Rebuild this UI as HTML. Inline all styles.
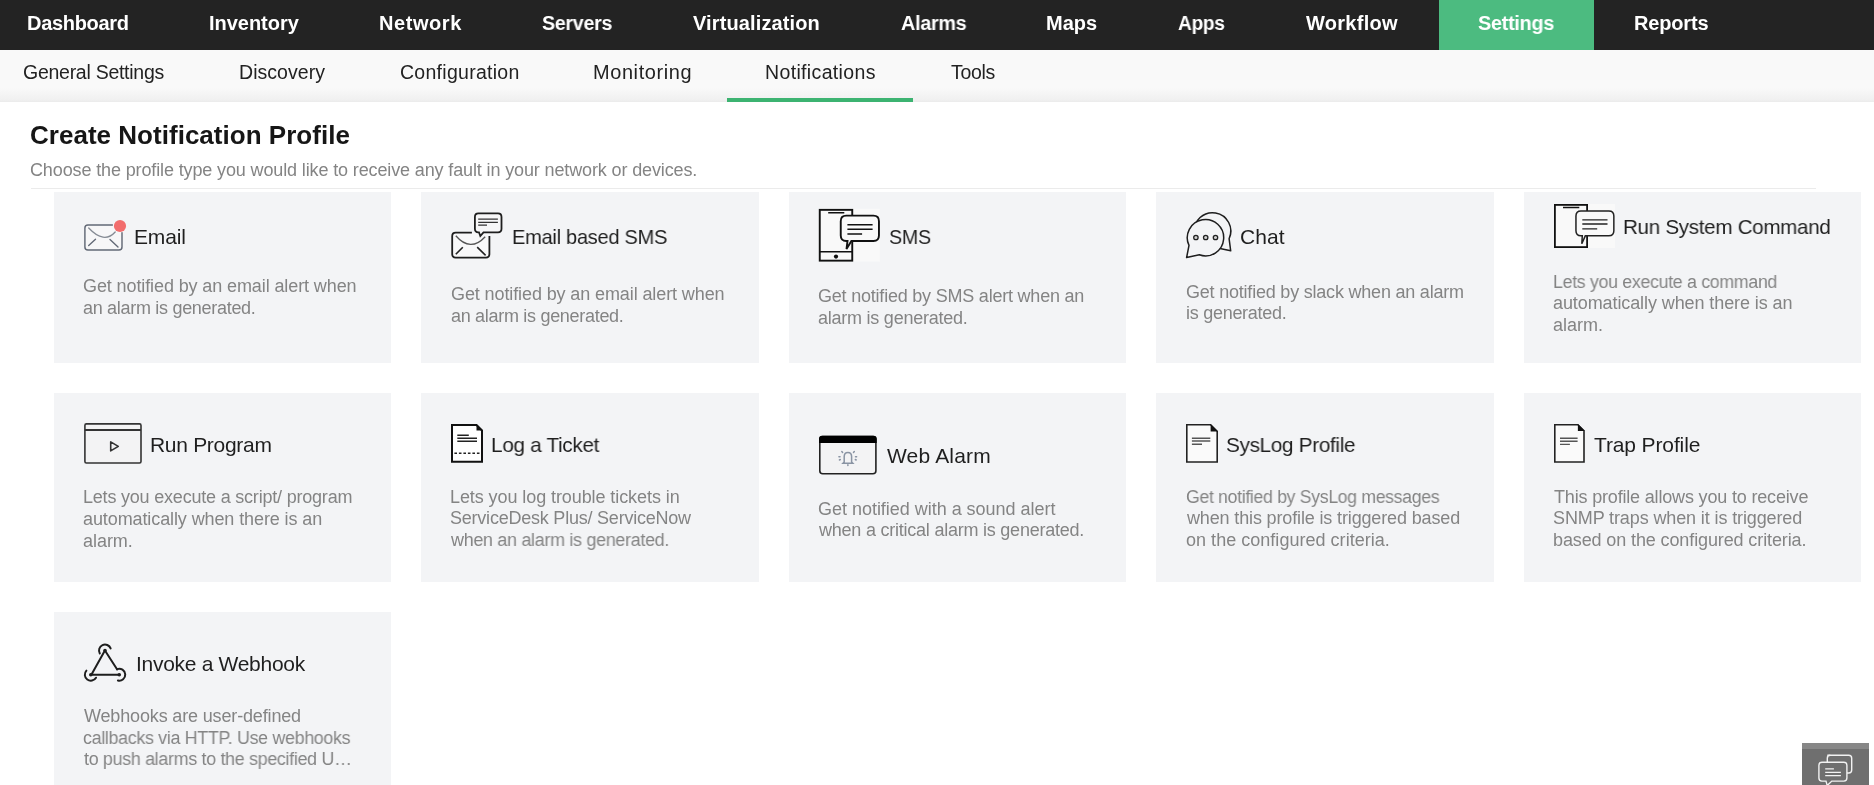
<!DOCTYPE html>
<html>
<head>
<meta charset="utf-8">
<title>Create Notification Profile</title>
<style>
html,body{margin:0;padding:0;}
body{width:1874px;height:785px;overflow:hidden;position:relative;background:#ffffff;font-family:"Liberation Sans",sans-serif;}
.t{position:absolute;white-space:pre;will-change:transform;transform-origin:0 0;font-family:"Liberation Sans",sans-serif;}
.hd{-webkit-text-stroke:0.7px #111;}
.nv{-webkit-text-stroke:0.6px #fff;}
.d{font-size:18px;line-height:22px;color:#848484;font-weight:400;}
#nav{position:absolute;left:0;top:0;width:1874px;height:50px;background:#232323;}
#navact{position:absolute;left:1439px;top:0;width:155px;height:50px;background:#4cbb80;}
#sub{position:absolute;left:0;top:50px;width:1874px;height:52px;background:linear-gradient(#f9f9f9 0,#f9f9f9 38px,#f0f0f0 50px,#ebebeb 52px);}
#subact{position:absolute;left:727px;top:98px;width:186px;height:4px;background:#3cb371;}
#hr{position:absolute;left:31px;top:188px;width:1785px;height:1px;background:#ebebeb;}
.card{position:absolute;background:#f3f4f6;}
svg{position:absolute;overflow:visible;}
#widget{position:absolute;left:1802px;top:743px;width:67px;height:42px;background:#6f6f6f;}
#widget .strip{position:absolute;left:0;top:0;width:67px;height:6px;background:#878787;}
</style>
</head>
<body>
<div id="nav"></div>
<div id="navact"></div>
<div id="sub"></div>
<div id="subact"></div>
<div id="hr"></div>

<div class="card" style="left:54px;top:192px;width:337px;height:171px"></div>
<div class="card" style="left:421px;top:192px;width:338px;height:171px"></div>
<div class="card" style="left:789px;top:192px;width:337px;height:171px"></div>
<div class="card" style="left:1156px;top:192px;width:338px;height:171px"></div>
<div class="card" style="left:1524px;top:192px;width:337px;height:171px"></div>
<div class="card" style="left:54px;top:393px;width:337px;height:189px"></div>
<div class="card" style="left:421px;top:393px;width:338px;height:189px"></div>
<div class="card" style="left:789px;top:393px;width:337px;height:189px"></div>
<div class="card" style="left:1156px;top:393px;width:338px;height:189px"></div>
<div class="card" style="left:1524px;top:393px;width:337px;height:189px"></div>
<div class="card" style="left:54px;top:612px;width:337px;height:173px"></div>

<svg style="left:0;top:0" width="1874" height="785" viewBox="0 0 1874 785">
<!-- Email -->
<rect x="84" y="224" width="39" height="27" rx="3" fill="#f7f7f8"/>
<g fill="none" stroke-linecap="round">
<path d="M112.4,225 H87.9 Q84.9,225 84.9,228 V246.9 Q84.9,249.9 87.9,249.9 H119 Q122,249.9 122,246.9 V232.6" stroke="#626976" stroke-width="1.45"/>
<path d="M88.7,228 Q104.05,244.3 115.2,232" stroke="#858b94" stroke-width="1.3"/>
<path d="M88.7,245.6 L95.5,239.2 M110,239.5 L118,247.1" stroke="#626976" stroke-width="1.35"/>
</g>
<circle cx="120" cy="226" r="6.1" fill="#f26d6d"/>
<!-- Email based SMS -->
<rect x="452" y="232.5" width="37.5" height="25.3" rx="3" fill="#f8f8f9"/>
<g fill="none">
<path d="M471.9,232.7 H455.7 Q452.2,232.7 452.2,236.2 V254.1 Q452.2,257.6 455.7,257.6 H485.9 Q489.4,257.6 489.4,254.1 V236" stroke="#1e1e1e" stroke-width="1.8"/>
<path d="M455.8,235.7 Q470.5,252.6 485.2,236.7" stroke="#555" stroke-width="1.3"/>
<path d="M455.8,254.2 L462.8,247.2 M477.2,247.2 L485.6,255.3" stroke="#222" stroke-width="1.6"/>
</g>
<path d="M478.4,213.45 H498 Q501.5,213.45 501.5,216.95 V228.8 Q501.5,232.3 498,232.3 H483.5 L480.3,236 L479,232.3 H478.4 Q474.9,232.3 474.9,228.8 V216.95 Q474.9,213.45 478.4,213.45 Z" fill="#f7f7f8" stroke="#1e1e1e" stroke-width="1.8"/>
<path d="M478.2,219.2 H497.9 M478.2,222.4 H497.9 M478.2,225.2 H487" stroke="#333" stroke-width="1.3"/>
<!-- SMS -->
<rect x="818.8" y="208.9" width="61.1" height="52.7" fill="#f9f9f9"/>
<rect x="819.75" y="209.85" width="32.5" height="50.8" fill="none" stroke="#111" stroke-width="1.9"/>
<path d="M828.2,212.8 H844.3 M819.75,251.7 H852.25" stroke="#111" stroke-width="1.6"/>
<circle cx="836" cy="256.6" r="2.1" fill="#111"/>
<path d="M846.25,215.65 H873.45 Q878.95,215.65 878.95,221.15 V235.45 Q878.95,240.95 873.45,240.95 H851.4 L846.5,249 L847.5,240.95 H846.25 Q840.75,240.95 840.75,235.45 V221.15 Q840.75,215.65 846.25,215.65 Z" fill="#f9f9f9" stroke="#111" stroke-width="1.9"/>
<path d="M847.4,224.8 H872.6 M847.4,229.3 H872.6 M847.4,233.9 H862.1" stroke="#111" stroke-width="1.5"/>
<!-- Chat -->
<path d="M1229.1,238.7 A18.3,18.3 0 1 0 1218.8,248.2 L1230.7,250.8 Z" fill="#f3f4f6" stroke="#1e1e1e" stroke-width="1.5" stroke-linejoin="round"/>
<path d="M1199.3,254.8 A18.2,18.2 0 1 0 1189,245.4 L1186.6,257.6 Z" fill="#f3f4f6" stroke="#1e1e1e" stroke-width="1.5" stroke-linejoin="round"/>
<g fill="#cfcfcf" stroke="#222" stroke-width="1.3">
<circle cx="1195.9" cy="237.5" r="2.2"/><circle cx="1205.7" cy="237.5" r="2.2"/><circle cx="1215.5" cy="237.5" r="2.2"/>
</g>
<!-- Run System Command -->
<rect x="1554" y="204" width="61" height="44" fill="#f9f9f9"/>
<rect x="1554.9" y="204.9" width="32.2" height="42.2" fill="none" stroke="#111" stroke-width="1.8"/>
<path d="M1563,207.5 H1579.3" stroke="#111" stroke-width="1.5"/>
<path d="M1580.95,210.95 H1608.85 Q1613.85,210.95 1613.85,215.95 V230.85 Q1613.85,235.85 1608.85,235.85 H1585.3 L1581.8,243.7 L1582.3,235.85 H1580.95 Q1575.95,235.85 1575.95,230.85 V215.95 Q1575.95,210.95 1580.95,210.95 Z" fill="#f9f9f9" stroke="#222" stroke-width="1.5"/>
<path d="M1582.3,219.8 H1607.5 M1582.3,224 H1607.5 M1582.3,228.8 H1597.2" stroke="#222" stroke-width="1.3"/>
<!-- Run Program -->
<rect x="84.9" y="423.9" width="56.1" height="39.1" rx="1.5" fill="#f3f3f4" stroke="#333" stroke-width="1.6"/>
<path d="M84.9,430 H141" stroke="#333" stroke-width="2.2"/>
<path d="M110.7,441.9 V450.9 L118.3,446.4 Z" fill="none" stroke="#333" stroke-width="1.6" stroke-linejoin="round"/>
<!-- Log a Ticket -->
<path d="M452,425 H476.5 L482,430.5 V461.8 H452 Z" fill="#ffffff" stroke="#111" stroke-width="2"/>
<path d="M476.5,424 L483,430.5 H476.5 Z" fill="#111"/>
<path d="M457.3,435.2 H468.8 M457.3,438.3 H477 M457.3,441.2 H477" stroke="#222" stroke-width="1.4"/>
<path d="M454.4,453.2 H479.9" stroke="#222" stroke-width="1.5" stroke-dasharray="2.6 1.9"/>
<!-- Web Alarm -->
<rect x="819.8" y="436.6" width="56.1" height="37.2" rx="3" fill="#f3f3f4" stroke="#222" stroke-width="1.6"/>
<path d="M819,438.8 Q819,435.8 822,435.8 H873.7 Q876.7,435.8 876.7,438.8 V442.9 H819 Z" fill="#000"/>
<g fill="none" stroke="#8a94a3" stroke-width="1.5" stroke-linecap="round">
<path d="M844.2,462 V456.5 Q844.2,452.4 847.9,452.4 Q851.6,452.4 851.6,456.5 V462 L852.8,463.2 H843 Z"/>
<path d="M847.9,464.8 V465.6"/>
<path d="M841.8,451.5 L842.6,452.4 M838.9,456.8 H840 M839.4,460 L840.3,459.5 M854.3,451.5 L853.5,452.4 M856.6,456.8 H855.5 M856.2,460 L855.3,459.5"/>
</g>
<!-- SysLog -->
<path d="M1186.8,424.7 H1210.6 L1217.2,431.3 V462 H1186.8 Z" fill="#fafafa" stroke="#222" stroke-width="1.6"/>
<path d="M1210.6,424 L1218,431.4 H1210.6 Z" fill="#111"/>
<path d="M1191.9,438.3 H1210.3 M1191.9,441 H1210.3 M1191.9,444.2 H1202" stroke="#555" stroke-width="1.4"/>
<!-- Trap -->
<path d="M1554.8,424.7 H1577.9 L1584,430.8 V462 H1554.8 Z" fill="#fafafa" stroke="#222" stroke-width="1.6"/>
<path d="M1577.9,424 L1584.8,430.9 H1577.9 Z" fill="#111"/>
<path d="M1560,438.3 H1577.6 M1560,441.2 H1577.6 M1560,444.4 H1569.9" stroke="#555" stroke-width="1.4"/>
<!-- Webhook -->
<g fill="none" stroke="#1e1e1e" stroke-width="2" stroke-linecap="round">
<path d="M104.2,651.8 L91.5,674.4 M105.6,651.5 L117.2,669.5 M90.8,674.7 H119.3"/>
<path d="M99.80,653.50 A6,6 0 1 1 110.64,648.45"/>
<path d="M86.41,670.61 A6,6 0 1 0 96.00,677.70"/>
<path d="M117.10,669.10 A6,6 0 1 1 117.90,680.55"/>
</g>
<g fill="#1e1e1e"><circle cx="105" cy="650.5" r="1.8"/><circle cx="90.8" cy="674.7" r="1.8"/><circle cx="119.25" cy="674.7" r="1.8"/></g>
</svg>


<div class='t ' style='left:26.6px;top:13.1px;font-size:20px;line-height:20px;font-weight:700;color:#ffffff;letter-spacing:-0.300px;transform:scaleX(0.9980)'>Dashboard</div>
<div class='t ' style='left:208.7px;top:13.1px;font-size:20px;line-height:20px;font-weight:700;color:#ffffff;letter-spacing:-0.025px'>Inventory</div>
<div class='t ' style='left:379.0px;top:13.1px;font-size:20px;line-height:20px;font-weight:700;color:#ffffff;letter-spacing:0.567px'>Network</div>
<div class='t ' style='left:542.0px;top:13.1px;font-size:20px;line-height:20px;font-weight:700;color:#ffffff;letter-spacing:-0.300px;transform:scaleX(0.9829)'>Servers</div>
<div class='t ' style='left:693.4px;top:13.1px;font-size:20px;line-height:20px;font-weight:700;color:#ffffff;letter-spacing:0.123px'>Virtualization</div>
<div class='t ' style='left:900.6px;top:13.1px;font-size:20px;line-height:20px;font-weight:700;color:#ffffff;letter-spacing:-0.300px;transform:scaleX(0.9893)'>Alarms</div>
<div class='t ' style='left:1046.0px;top:13.1px;font-size:20px;line-height:20px;font-weight:700;color:#ffffff;letter-spacing:0.000px'>Maps</div>
<div class='t ' style='left:1177.6px;top:13.1px;font-size:20px;line-height:20px;font-weight:700;color:#ffffff;letter-spacing:-0.300px;transform:scaleX(0.9552)'>Apps</div>
<div class='t ' style='left:1306.0px;top:13.1px;font-size:20px;line-height:20px;font-weight:700;color:#ffffff;letter-spacing:0.286px'>Workflow</div>
<div class='t ' style='left:1478.0px;top:13.1px;font-size:20px;line-height:20px;font-weight:700;color:#ffffff;letter-spacing:-0.300px;transform:scaleX(0.9933)'>Settings</div>
<div class='t ' style='left:1634.0px;top:13.1px;font-size:20px;line-height:20px;font-weight:700;color:#ffffff;letter-spacing:-0.167px'>Reports</div>
<div class='t ' style='left:23.0px;top:62.5px;font-size:19.5px;line-height:19.5px;font-weight:400;color:#222222;letter-spacing:-0.267px'>General Settings</div>
<div class='t ' style='left:239.0px;top:62.5px;font-size:19.5px;line-height:19.5px;font-weight:400;color:#222222;letter-spacing:0.050px'>Discovery</div>
<div class='t ' style='left:400.0px;top:62.5px;font-size:19.5px;line-height:19.5px;font-weight:400;color:#222222;letter-spacing:0.275px'>Configuration</div>
<div class='t ' style='left:592.5px;top:62.5px;font-size:19.5px;line-height:19.5px;font-weight:400;color:#222222;letter-spacing:0.600px;transform:scaleX(1.0222)'>Monitoring</div>
<div class='t ' style='left:764.7px;top:62.5px;font-size:19.5px;line-height:19.5px;font-weight:400;color:#222222;letter-spacing:0.350px'>Notifications</div>
<div class='t ' style='left:951.0px;top:62.5px;font-size:19.5px;line-height:19.5px;font-weight:400;color:#222222;letter-spacing:-0.300px;transform:scaleX(0.9954)'>Tools</div>
<div class='t ' style='left:30.4px;top:121.8px;font-size:26px;line-height:26px;font-weight:700;color:#161616;letter-spacing:0.023px'>Create Notification Profile</div>
<div class='t ' style='left:30.4px;top:160.8px;font-size:18px;line-height:18px;font-weight:400;color:#848484;letter-spacing:-0.128px'>Choose the profile type you would like to receive any fault in your network or devices.</div>
<div class='t ' style='left:134.0px;top:226.2px;font-size:21px;line-height:21px;font-weight:400;color:#1f1f1f;letter-spacing:-0.175px'>Email</div>
<div class='t ' style='left:512.1px;top:226.4px;font-size:21px;line-height:21px;font-weight:400;color:#1f1f1f;letter-spacing:-0.300px;transform:scaleX(0.9549)'>Email based SMS</div>
<div class='t ' style='left:888.8px;top:225.9px;font-size:21px;line-height:21px;font-weight:400;color:#1f1f1f;letter-spacing:-0.300px;transform:scaleX(0.9355)'>SMS</div>
<div class='t ' style='left:1240.0px;top:225.9px;font-size:21px;line-height:21px;font-weight:400;color:#1f1f1f;letter-spacing:0.067px'>Chat</div>
<div class='t ' style='left:1623.0px;top:216.2px;font-size:21px;line-height:21px;font-weight:400;color:#1f1f1f;letter-spacing:-0.300px;transform:scaleX(0.9804)'>Run System Command</div>
<div class='t ' style='left:150.0px;top:433.9px;font-size:21px;line-height:21px;font-weight:400;color:#1f1f1f;letter-spacing:-0.300px'>Run Program</div>
<div class='t ' style='left:490.8px;top:434.2px;font-size:21px;line-height:21px;font-weight:400;color:#1f1f1f;letter-spacing:-0.300px;transform:scaleX(0.9861)'>Log a Ticket</div>
<div class='t ' style='left:886.6px;top:445.1px;font-size:21px;line-height:21px;font-weight:400;color:#1f1f1f;letter-spacing:0.175px'>Web Alarm</div>
<div class='t ' style='left:1226.0px;top:433.8px;font-size:21px;line-height:21px;font-weight:400;color:#1f1f1f;letter-spacing:-0.300px;transform:scaleX(0.9854)'>SysLog Profile</div>
<div class='t ' style='left:1594.4px;top:433.8px;font-size:21px;line-height:21px;font-weight:400;color:#1f1f1f;letter-spacing:-0.127px'>Trap Profile</div>
<div class='t ' style='left:135.6px;top:653.2px;font-size:21px;line-height:21px;font-weight:400;color:#1f1f1f;letter-spacing:-0.293px'>Invoke a Webhook</div>
<div class='t d' style='left:83.0px;top:274.8px;letter-spacing:-0.106px'>Get notified by an email alert when</div>
<div class='t d' style='left:83.0px;top:296.6px;letter-spacing:-0.300px'>an alarm is generated.</div>
<div class='t d' style='left:450.6px;top:283.0px;letter-spacing:-0.106px'>Get notified by an email alert when</div>
<div class='t d' style='left:450.6px;top:304.8px;letter-spacing:-0.300px;transform:scaleX(0.9977)'>an alarm is generated.</div>
<div class='t d' style='left:817.8px;top:284.8px;letter-spacing:-0.212px'>Get notified by SMS alert when an</div>
<div class='t d' style='left:817.8px;top:306.6px;letter-spacing:-0.239px'>alarm is generated.</div>
<div class='t d' style='left:1185.6px;top:280.5px;letter-spacing:-0.209px'>Get notified by slack when an alarm</div>
<div class='t d' style='left:1185.6px;top:302.3px;letter-spacing:-0.275px'>is generated.</div>
<div class='t d' style='left:1553.0px;top:270.5px;letter-spacing:-0.300px;transform:scaleX(0.9854)'>Lets you execute a command</div>
<div class='t d' style='left:1553.0px;top:292.3px;letter-spacing:-0.093px'>automatically when there is an</div>
<div class='t d' style='left:1553.0px;top:314.1px;letter-spacing:0.000px'>alarm.</div>
<div class='t d' style='left:83.2px;top:486.2px;letter-spacing:-0.203px'>Lets you execute a script/ program</div>
<div class='t d' style='left:83.2px;top:508.0px;letter-spacing:-0.100px'>automatically when there is an</div>
<div class='t d' style='left:83.2px;top:529.8px;letter-spacing:-0.040px'>alarm.</div>
<div class='t d' style='left:450.2px;top:485.5px;letter-spacing:-0.083px'>Lets you log trouble tickets in</div>
<div class='t d' style='left:450.2px;top:507.3px;letter-spacing:-0.222px'>ServiceDesk Plus/ ServiceNow</div>
<div class='t d' style='left:451.2px;top:529.1px;letter-spacing:-0.300px;transform:scaleX(0.9959)'>when an alarm is generated.</div>
<div class='t d' style='left:817.8px;top:497.6px;letter-spacing:-0.023px'>Get notified with a sound alert</div>
<div class='t d' style='left:818.8px;top:519.4px;letter-spacing:-0.229px'>when a critical alarm is generated.</div>
<div class='t d' style='left:1185.6px;top:485.5px;letter-spacing:-0.300px;transform:scaleX(0.9783)'>Get notified by SysLog messages</div>
<div class='t d' style='left:1186.6px;top:507.3px;letter-spacing:-0.143px'>when this profile is triggered based</div>
<div class='t d' style='left:1185.6px;top:529.1px;letter-spacing:0.027px'>on the configured criteria.</div>
<div class='t d' style='left:1554.0px;top:485.5px;letter-spacing:-0.173px'>This profile allows you to receive</div>
<div class='t d' style='left:1553.0px;top:507.3px;letter-spacing:-0.117px'>SNMP traps when it is triggered</div>
<div class='t d' style='left:1553.0px;top:529.1px;letter-spacing:-0.116px'>based on the configured criteria.</div>
<div class='t d' style='left:84.0px;top:704.7px;letter-spacing:-0.154px'>Webhooks are user-defined</div>
<div class='t d' style='left:83.0px;top:726.5px;letter-spacing:-0.300px;transform:scaleX(0.9892)'>callbacks via HTTP. Use webhooks</div>
<div class='t d' style='left:84.0px;top:748.3px;letter-spacing:-0.300px;transform:scaleX(0.9914)'>to push alarms to the specified U…</div>

<div id="widget"><div class="strip"></div>
<svg style="left:0;top:0" width="67" height="42" viewBox="1802 743 67 42">
<path d="M1827.3,755.2 H1848.7 Q1851.7,755.2 1851.7,758.2 V770 Q1851.7,773 1848.7,773 H1846.9" fill="none" stroke="#f2f2f2" stroke-width="1.4"/>
<path d="M1827.3,762.3 V758.2 Q1827.3,755.2 1830.3,755.2" fill="none" stroke="#f2f2f2" stroke-width="1.4"/>
<path d="M1821.9,762.3 H1843.9 Q1846.9,762.3 1846.9,765.3 V778.1 Q1846.9,781.1 1843.9,781.1 H1831.8 L1827.2,785.5 L1826,781.1 H1821.9 Q1818.9,781.1 1818.9,778.1 V765.3 Q1818.9,762.3 1821.9,762.3 Z" fill="#6f6f6f" stroke="#f2f2f2" stroke-width="1.4"/>
<path d="M1825.2,768.9 H1833.9 M1825.2,772.4 H1840.9 M1825.2,775.7 H1840.9" stroke="#f2f2f2" stroke-width="1.3"/>
</svg>
</div>
</body>
</html>
